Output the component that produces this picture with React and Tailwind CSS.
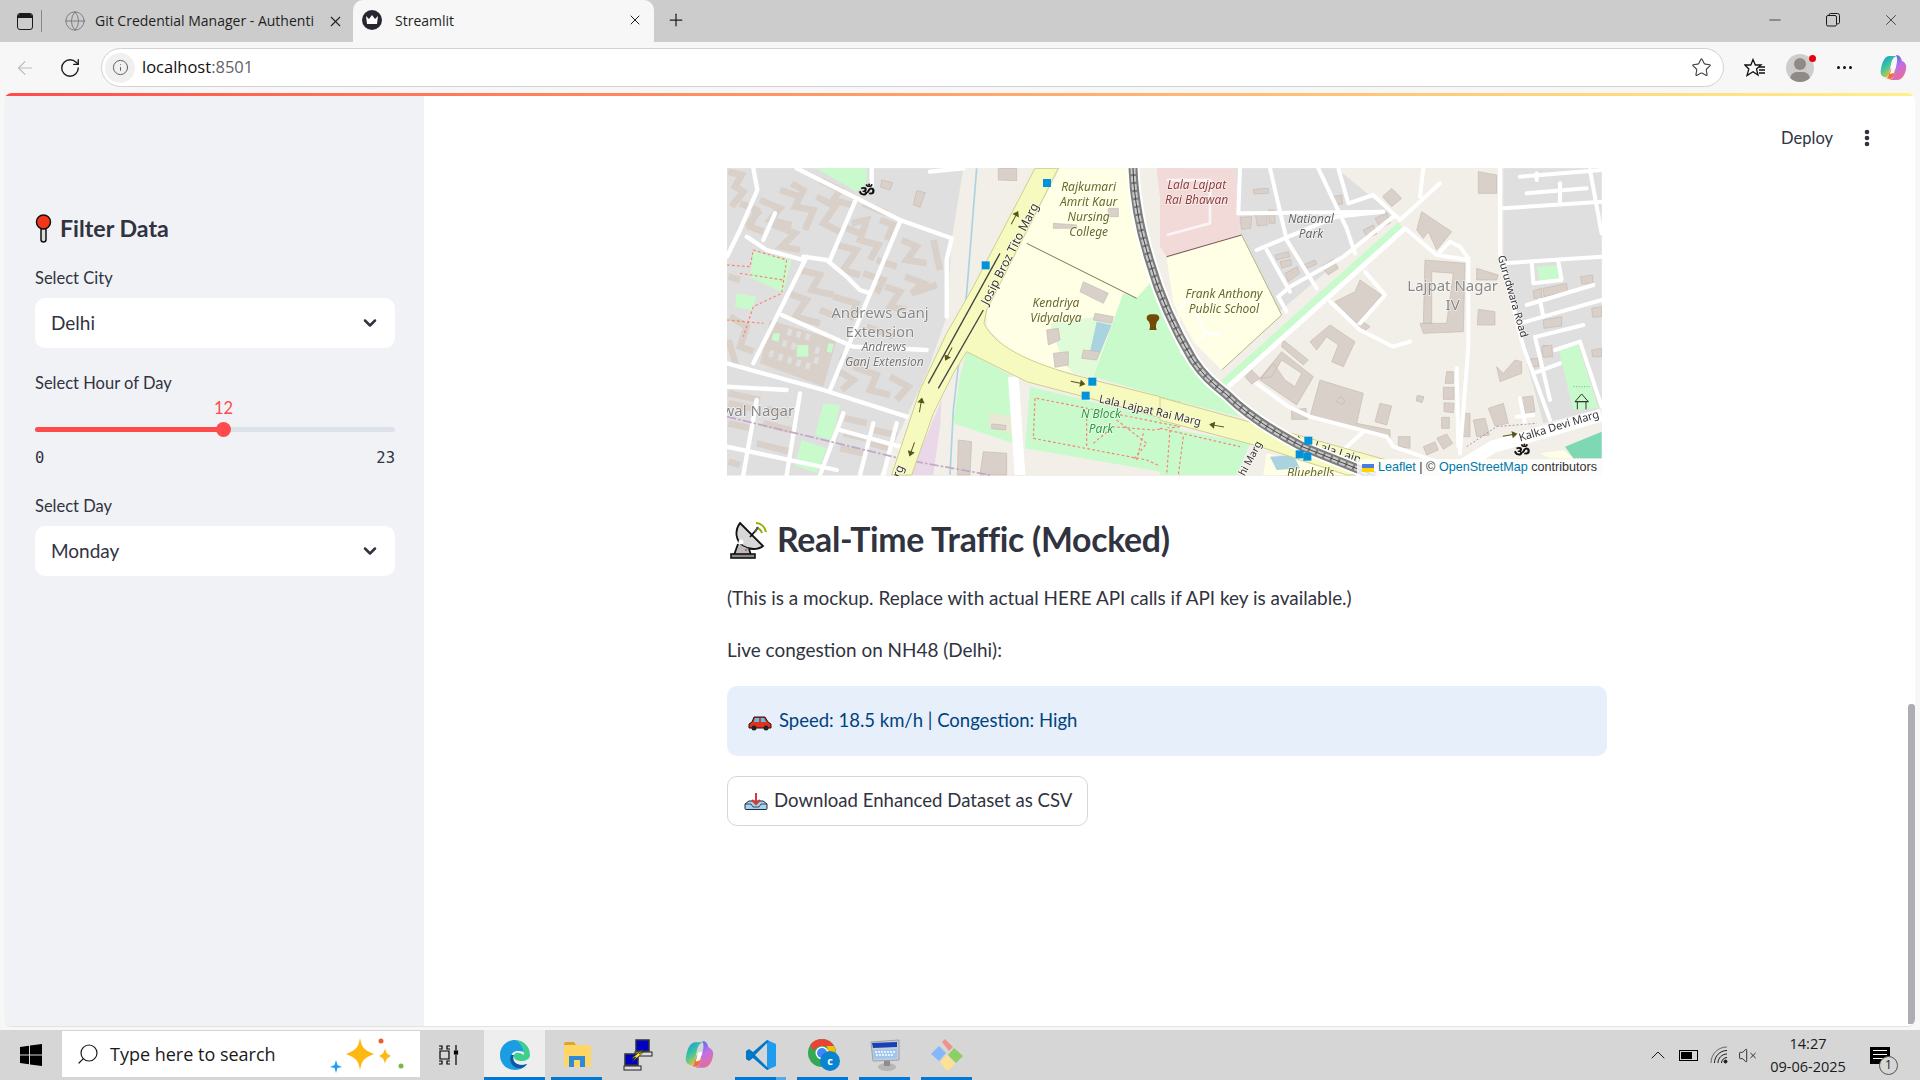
import { ChevronDown, Info, Minus, Plus, RotateCw, Search, Star, X, ArrowLeft, ChevronUp, VolumeX, Globe } from "lucide-react";

const GRAY = "#e0dfdf";
const GREEN = "#c8facc";
const BUILDING = "#d9d0c9";

// map pieces are written in 3x crop coordinates, see the two groups below
const leftAreas = [
  [GRAY, "21,25 730,25 695,240 680,470 620,640 560,770 480,945 21,945"],
  [BUILDING, "150,480 350,540 310,680 120,610"],
  [GREEN, "290,25 440,25 440,70 410,95"],
  [GREEN, "100,275 215,300 190,400 90,350"],
  [GREEN, "50,400 110,410 95,450 45,440"],
  [GREEN, "160,520 180,520 175,545 155,540"],
  [GREEN, "230,555 265,555 265,590 230,590"],
  [GREEN, "325,550 342,552 335,578 320,575"],
  [GREEN, "310,730 360,735 335,840 285,825"],
  [GREEN, "245,840 320,865 290,940 225,915"],
  ["#ead8e8", "665,720 570,945 640,945 660,800"],
  ["#ffffe5", "1020,25 1230,25 1270,200 1340,400 1290,370 1250,415 1210,400 1120,650 900,610 800,500 800,450"],
  ["#f2dad9", "1310,25 1380,25 1380,280 1340,290"],
  ["#ffffe5", "1340,295 1380,285 1380,500"],
  [GREEN, "1210,400 1250,415 1290,370 1380,530 1380,725 1120,650"],
  ["#e0fbd8", "990,490 1130,470 1180,470 1120,650 1060,640 1030,610"],
  ["#aad3df", "1130,485 1175,495 1140,580 1110,575"],
  [GREEN, "740,575 880,650 880,850 700,790 720,650"],
  [GREEN, "930,680 1380,790 1380,945 915,865"],
  ["#e9e9d6", "810,760 880,770 880,825 805,800"],
];

const leftBuildings = [
  "485,60 518,68 510,90 482,82",
  "590,92 616,98 600,142 580,134",
  "1090,365 1165,400 1150,430 1080,395",
  "1125,460 1180,470 1175,490 1120,480",
  "980,510 1015,505 1020,540 985,555",
  "1000,580 1045,575 1045,615 1005,622",
  "1090,570 1140,575 1130,600 1085,595",
  "1165,145 1195,145 1195,170 1165,170",
  "815,792 858,796 856,810 815,806",
  "1000,190 1070,195 1070,205 1000,205",
  "835,25 890,25 890,62 835,60",
  "790,875 860,880 860,945 780,945",
  "715,840 755,845 750,945 712,945",
];

const leftHouses = [
  "25,35 65,45 45,80 70,95 35,140",
  "120,120 180,145 150,180 215,195",
  "215,70 250,90 225,140 280,150 255,210",
  "290,110 345,140 310,190 360,215",
  "150,190 225,220 185,260 240,270",
  "395,190 440,180 420,240 475,255 450,300",
  "350,255 410,270 370,330 420,345",
  "545,240 590,260 560,300 620,310",
  "555,350 610,370 575,400 650,375",
  "495,380 540,395 510,440 560,450",
  "240,330 300,345 275,390 340,405",
  "205,400 260,420 225,470 300,490",
  "120,150 80,200",
  "30,470 80,500 60,560 100,575",
  "350,630 400,660 365,690",
  "400,620 470,645 450,690 510,705",
  "510,650 565,680 530,720",
  "60,130 110,150 90,200 130,215",
  "180,90 240,110",
  "300,60 360,90 340,120 395,135",
  "370,200 420,220",
  "430,130 500,160",
  "480,180 520,195 500,240",
  "470,300 530,320",
  "430,340 490,360 470,400",
  "340,410 410,430 390,480",
  "300,450 350,470",
  "440,500 520,530",
  "360,590 420,610",
  "25,350 60,360",
  "25,540 50,620",
  "640,240 660,330",
  "25,700 120,720",
  "25,730 120,750",
  "25,790 90,805",
  "25,905 60,915",
  "140,745 210,765",
  "130,790 220,812",
  "110,850 210,875",
  "375,775 440,790",
  "370,820 440,835",
  "360,865 430,880",
  "460,810 530,825",
  "450,850 510,865",
];

const leftRoads = [
  "230,25 540,180 695,235 680,300 680,470",
  "100,25 112,90 60,210 21,290",
  "540,185 330,690",
  "405,125 330,300",
  "260,290 100,610",
  "165,160 130,240",
  "80,230 140,270 250,300",
  "250,290 320,300 380,350 420,390 450,400",
  "185,465 400,560 620,570",
  "21,610 310,690 560,770",
  "21,680 200,690",
  "240,700 200,945",
  "370,760 300,945",
  "110,720 70,945",
  "460,790 420,945",
  "530,790 490,945",
  "360,810 540,860",
  "21,860 350,930",
  "455,25 455,75",
  "630,35 730,25",
];

const rightAreas = [
  [GRAY, "225,25 530,25 700,165 340,470 240,225"],
  [GRAY, "1030,25 1325,25 1325,745 1150,790 1090,570 1030,300"],
  ["#f2dad9", "0,25 225,25 240,225 20,290 0,260"],
  ["#ffffe5", "20,295 245,225 365,465 185,630 100,545 40,430"],
  [GREEN, "0,470 60,580 180,700 240,770 0,710"],
  [GREEN, "1130,320 1195,315 1200,355 1140,365"],
  [GREEN, "1195,565 1255,555 1315,745 1240,750"],
  ["#ffffe5", "320,880 590,945 310,945"],
  ["#aad3df", "330,890 400,885 420,925 350,930"],
  ["#7ed8b4", "1215,860 1325,815 1325,895 1240,895"],
  ["#ffffe5", "1140,880 1210,870 1240,895 1170,895"],
  [GREEN, "0,800 270,850 230,945 0,945"],
];

const rightBuildings = [
  "955,35 1010,45 1010,100 955,100",
  "695,85 725,115 695,140 668,110",
  "785,155 875,215 830,270 805,215 790,235 770,210",
  "795,300 915,310 910,515 790,520 780,490 860,490 880,340 815,335 815,490 790,490",
  "950,325 1015,345 1010,360 950,360",
  "955,448 1005,455 1005,495 952,495",
  "600,360 665,405 590,490 525,425 585,395",
  "510,495 585,545 550,620 515,605 535,555 500,530 470,570 450,545",
  "605,482 630,500 612,515 595,498",
  "370,540 445,600 430,615 365,560",
  "365,575 460,650 410,735 300,660 340,610 375,660 405,680 425,640 365,600 335,650 300,655",
  "275,630 300,655 275,672 255,650",
  "480,660 610,700 590,790 690,810 690,835 560,800 450,770",
  "540,710 555,720 548,735 530,725",
  "660,730 695,738 680,795 645,785",
  "1010,620 1030,640 1065,600 1085,605 1085,640 1020,665",
  "1150,555 1175,560 1170,580 1145,575",
  "860,635 880,635 880,670 855,670",
  "850,682 882,682 882,718 850,718",
  "852,728 882,730 880,758 852,755",
  "845,772 868,772 868,805 845,805",
  "772,706 792,710 786,728 768,722",
  "985,745 1030,730 1045,790 1005,798",
  "940,780 975,775 988,825 950,830",
  "905,760 930,760 930,830 905,830",
  "790,860 825,845 835,870 800,885",
  "830,835 860,822 878,850 850,868",
  "395,750 438,745 442,778 395,778",
  "715,830 750,830 750,865 715,860",
  "240,172 275,170 272,205 245,208",
  "285,160 320,155 322,195 292,198",
  "325,150 345,150 345,190 328,190",
  "345,285 385,275 390,290 350,300",
  "360,305 392,298 395,315 365,325",
  "375,340 412,320 418,340 385,365",
  "485,320 520,298 535,325 505,345",
  "430,315 465,300 470,312 435,328",
  "610,210 640,195 650,222 622,235",
  "645,175 680,158 692,188 662,205",
  "515,110 545,105 548,132 520,135",
  "280,88 325,85 325,100 282,102",
  "1262,350 1298,345 1298,372 1265,372",
  "1120,392 1145,385 1145,415 1122,415",
  "1150,385 1220,370 1222,395 1152,410",
  "1150,480 1205,470 1205,498 1152,505",
  "1295,445 1325,440 1325,470 1298,472",
  "1295,570 1325,565 1325,590 1298,590",
  "1110,597 1135,595 1135,620 1112,620",
  "1145,560 1175,555 1178,590 1150,592",
  "1085,712 1118,708 1125,755 1095,760",
];

const rightRoads = [
  "535,25 565,130 640,105 720,180",
  "720,180 840,70",
  "790,25 780,110",
  "735,205 830,285 925,300 925,560 900,880",
  "840,275 870,245 900,260 925,295",
  "1020,25 1020,280 1090,560 1170,780",
  "1030,145 1325,125",
  "1080,50 1325,30",
  "1100,100 1280,85",
  "1130,40 1130,60",
  "1200,70 1200,125",
  "1290,30 1325,220",
  "1030,310 1325,290",
  "1115,305 1120,370 1205,360 1195,305",
  "1100,435 1300,375",
  "1140,420 1150,470",
  "1080,490 1325,420",
  "1125,530 1170,720",
  "1130,530 1270,495",
  "1185,570 1260,545 1325,740",
  "1120,640 1200,610",
  "235,160 670,155",
  "235,160 240,25",
  "290,270 530,170 670,155",
  "320,270 390,395",
  "355,410 390,380 550,290 700,170",
  "355,410 380,455",
  "475,25 560,205 585,280",
  "330,25 380,240 470,385",
  "510,425 600,510 700,560 750,545",
  "615,335 675,405 600,490",
  "290,670 385,740 450,770 680,830 700,860 830,905",
  "1080,715 1095,790",
  "1070,770 1120,765",
  "890,625 895,860",
  "550,870 610,815",
];

const blueSquares = [
  [969, 57], [785, 304], [1105, 653], [1085, 695],
];
const blueSquaresRight = [
  [433, 830], [407, 871], [430, 878],
];

const redDashes = [
  "21,315 90,320 100,270 200,300 185,400 100,440 70,530",
  "60,340 190,360",
  "21,480 130,490",
  "950,715 1380,800",
  "945,715 940,835 1280,900 1380,945",
  "1100,760 1100,860",
  "1190,780 1280,850 1240,900",
  "1120,850 1180,800 1300,810 1380,800",
  "1270,820 1250,900",
];

// the rows of tiny yards in the block under the Andrews Ganj label
const yards = [
  [205, 505], [232, 512], [259, 519], [190, 540], [217, 547], [288, 560], [150, 570], [178, 580], [205, 590], [232, 598], [260, 606], [285, 590],
];

const railPath =
  "M1133 168C1134 200 1140 230 1150 262C1158 290 1172 325 1193 360C1205 378 1215 385 1227 395C1250 418 1280 435 1303 447L1353 467L1375 476";

function Arrow({ x, y, rot }) {
  return (
    <g transform={`translate(${x} ${y}) rotate(${rot})`} stroke="#55551c" strokeWidth="3" fill="none">
      <path d="M-22 0H18" />
      <path d="M8 -8L20 0L8 8Z" fill="#55551c" />
    </g>
  );
}

function MapLabel({ x, y, size, fill, rot, italic, children, weight }) {
  return (
    <text
      x={x}
      y={y}
      fontSize={size}
      fill={fill}
      fontStyle={italic ? "italic" : "normal"}
      fontWeight={weight || 400}
      textAnchor="middle"
      stroke="#ffffff"
      strokeOpacity="0.65"
      strokeWidth="4"
      paintOrder="stroke"
      transform={rot ? `rotate(${rot} ${x} ${y})` : undefined}
    >
      {children}
    </text>
  );
}

function OsmMap() {
  return (
    <svg viewBox="727 168 875 308" className="block h-[308px] w-[875px] font-['Noto_Sans',sans-serif] blur-[0.35px]">
      <rect x="727" y="168" width="875" height="308" fill="#f2efe9" />

      <g transform="translate(720 160) scale(0.33333)">
        <path d="M770 25L740 400L700 750L690 945" stroke="#aad3df" strokeWidth="5" fill="none" />
        {leftAreas.map(([fill, points]) => (
          <polygon key={points} points={points} fill={fill} />
        ))}
        {yards.map(([x, y]) => (
          <rect key={`${x}-${y}`} x={x} y={y} width="13" height="20" fill={GRAY} transform={`rotate(15 ${x} ${y})`} />
        ))}
        {leftBuildings.map((points) => (
          <polygon key={points} points={points} fill={BUILDING} stroke="#c5bab0" strokeWidth="2" />
        ))}
        {leftHouses.map((points) => (
          <polyline key={points} points={points} fill="none" stroke={BUILDING} strokeWidth="20" />
        ))}
        {leftRoads.map((points) => (
          <polyline key={points} points={points} fill="none" stroke="#ffffff" strokeWidth="13" strokeLinecap="round" strokeLinejoin="round" />
        ))}
        {redDashes.map((points) => (
          <polyline key={points} points={points} fill="none" stroke="#fa8072" strokeWidth="3.5" strokeDasharray="8 7" />
        ))}
        <path d="M21 770L560 900L810 945" stroke="#c2a8c8" strokeWidth="5" strokeDasharray="28 6 8 6" fill="none" />
        <path d="M880 650L900 945" stroke="#ffffff" strokeWidth="32" fill="none" />
        <path d="M920 250L1250 415" stroke="#77774d" strokeWidth="3" fill="none" />
        <path
          d="M945 25L1015 25L800 450L792 490C830 570 960 620 1120 660L1380 725L1380 790L1110 715L920 665L740 575L700 640L640 760L575 945L515 945L600 690L680 520L760 380Z"
          fill="#f7fabf"
          stroke="#cfcf8c"
          strokeWidth="3"
        />
        <path d="M840 280L625 670" stroke="#444" strokeWidth="4" />
        <path d="M790 450L655 685" stroke="#444" strokeWidth="4" />
        <Arrow x={884} y={173} rot={-62} />
        <Arrow x={686} y={582} rot={118} />
        <Arrow x={602} y={735} rot={-80} />
        <Arrow x={576} y={868} rot={110} />
        <Arrow x={1074} y={668} rot={12} />

        {blueSquares.map(([x, y]) => (
          <rect key={x} x={x} y={y} width="24" height="24" fill="#0092da" />
        ))}

        <path d="M1296 463C1278 462 1276 478 1286 484C1290 492 1292 500 1288 510H1310C1306 500 1308 492 1312 484C1322 478 1320 462 1302 463Z" fill="#734a08" />

        <MapLabel x={480} y={474} size={45} fill="#888888">Andrews Ganj</MapLabel>
        <MapLabel x={480} y={532} size={45} fill="#888888">Extension</MapLabel>
        <MapLabel x={492} y={572} size={36} fill="#777777" italic>Andrews</MapLabel>
        <MapLabel x={493} y={617} size={36} fill="#777777" italic>Ganj Extension</MapLabel>
        <MapLabel x={115} y={768} size={45} fill="#888888">wal Nagar</MapLabel>
        <MapLabel x={1106} y={94} size={36} fill="#6b6b24" italic>Rajkumari</MapLabel>
        <MapLabel x={1106} y={139} size={36} fill="#6b6b24" italic>Amrit Kaur</MapLabel>
        <MapLabel x={1106} y={184} size={36} fill="#6b6b24" italic>Nursing</MapLabel>
        <MapLabel x={1106} y={229} size={36} fill="#6b6b24" italic>College</MapLabel>
        <MapLabel x={1008} y={440} size={36} fill="#6b6b24" italic>Kendriya</MapLabel>
        <MapLabel x={1008} y={485} size={36} fill="#6b6b24" italic>Vidyalaya</MapLabel>
        <MapLabel x={1143} y={774} size={36} fill="#2f9a45" italic>N Block</MapLabel>
        <MapLabel x={1143} y={819} size={36} fill="#2f9a45" italic>Park</MapLabel>
        <MapLabel x={880} y={287} size={36} fill="#333333" rot={-63}>Josip Broz Tito Marg</MapLabel>
        <MapLabel x={546} y={938} size={36} fill="#333333" rot={-68}>rg</MapLabel>
        <text x="440" y="112" fontSize="50" fontWeight="700" fill="#111111" textAnchor="middle">ॐ</text>
      </g>

      <g transform="translate(1160 160) scale(0.33333)">
        {rightAreas.map(([fill, points]) => (
          <polygon key={points} points={points} fill={fill} />
        ))}
        {rightBuildings.map((points) => (
          <polygon key={points} points={points} fill={BUILDING} stroke="#c5bab0" strokeWidth="2" />
        ))}
        {rightRoads.map((points) => (
          <polyline key={points} points={points} fill="none" stroke="#ffffff" strokeWidth="12" strokeLinecap="round" strokeLinejoin="round" />
        ))}
        <path d="M20 290L245 225" stroke="#77554d" strokeWidth="3" />
        <path d="M245 225L365 465L185 630" stroke="#b5b58a" strokeWidth="3" fill="none" />
        <path d="M720 195L190 670" stroke={GREEN} strokeWidth="20" fill="none" />
        <path d="M735 205L205 680" stroke="#ffffff" strokeWidth="15" fill="none" />
        <path d="M20 60H150V190L20 225" stroke="#ffffff" strokeOpacity="0.7" strokeWidth="8" fill="none" />
        <path d="M110 460L135 520L110 545M135 520L180 525M80 420L60 445" stroke="#ffffff" strokeWidth="8" fill="none" />
        <path
          d="M0 712L430 830L680 900L620 945L560 945L300 860L0 780Z"
          fill="#f7fabf"
          stroke="#cfcf8c"
          strokeWidth="3"
        />
        <path d="M860 945L1000 860L1325 765" stroke="#ffffff" strokeWidth="38" fill="none" />
        <path d="M920 860L1010 800L1130 790" stroke="#a792ad" strokeWidth="3" strokeDasharray="6 6" fill="none" />
        <path d="M0 805L240 860M30 810L20 945M70 830L55 945" stroke="#fa8072" strokeWidth="3.5" strokeDasharray="8 7" fill="none" />
        <path d="M1245 725H1285M1252 725V748M1278 725V748M1265 702L1245 725H1285Z" stroke="#333" strokeWidth="3" fill="none" />
        <path d="M1240 680H1290" stroke="#6fb57a" strokeWidth="3" strokeDasharray="3 5" />
        <Arrow x={170} y={797} rot={190} />
        <Arrow x={405} y={835} rot={18} />
        <Arrow x={1050} y={825} rot={-10} />
        <MapLabel x={110} y={86} size={36} fill="#8f3c3c" italic>Lala Lajpat</MapLabel>
        <MapLabel x={110} y={131} size={36} fill="#8f3c3c" italic>Rai Bhawan</MapLabel>
        <MapLabel x={453} y={190} size={36} fill="#666666" italic>National</MapLabel>
        <MapLabel x={453} y={234} size={36} fill="#666666" italic>Park</MapLabel>
        <MapLabel x={192} y={414} size={36} fill="#6b6b24" italic>Frank Anthony</MapLabel>
        <MapLabel x={192} y={459} size={36} fill="#6b6b24" italic>Public School</MapLabel>
        <MapLabel x={878} y={393} size={45} fill="#888888">Lajpat Nagar</MapLabel>
        <MapLabel x={878} y={451} size={45} fill="#888888">IV</MapLabel>
        <MapLabel x={1048} y={412} size={32} fill="#333333" rot={74}>Gurudwara Road</MapLabel>
        <MapLabel x={1200} y={808} size={33} fill="#333333" rot={-17}>Kalka Devi Marg</MapLabel>
        <MapLabel x={530} y={888} size={35} fill="#333333" rot={18}>Lala Lajp</MapLabel>
        <MapLabel x={280} y={900} size={31} fill="#333333" rot={-62}>hi Marg</MapLabel>
        <MapLabel x={452} y={952} size={36} fill="#6b6b24" italic>Bluebells</MapLabel>
        <text x="1086" y="890" fontSize="50" fontWeight="700" fill="#111111" textAnchor="middle">ॐ</text>
      </g>

      <path d={railPath} fill="none" stroke="#ffffff" strokeWidth="13" />
      <path d={railPath} fill="none" stroke="#7c7c7c" strokeWidth="9" />
      <path d={railPath} fill="none" stroke="#c8c8c8" strokeWidth="5" strokeDasharray="6 2" />
      <path d={railPath} fill="none" stroke="#444444" strokeWidth="1" />

      <g transform="translate(1160 160) scale(0.33333)">
        {blueSquaresRight.map(([x, y]) => (
          <rect key={x} x={x} y={y} width="24" height="24" fill="#0092da" />
        ))}
      </g>
      <g transform="translate(720 160) scale(0.33333)">
        <MapLabel x={1288} y={762} size={33} fill="#333333" rot={13}>Lala Lajpat Rai Marg</MapLabel>
      </g>
    </svg>
  );
}

function Copilot({ size, id }) {
  return (
    <svg width={size} height={size} viewBox="0 0 28 28">
      <defs>
        <linearGradient id={`${id}a`} x1="0" y1="0" x2="0.6" y2="1">
          <stop offset="0" stopColor="#1c8fe0" />
          <stop offset="0.5" stopColor="#38c6a0" />
          <stop offset="1" stopColor="#f4c430" />
        </linearGradient>
        <linearGradient id={`${id}b`} x1="0.2" y1="0" x2="0.8" y2="1">
          <stop offset="0" stopColor="#2a6fe8" />
          <stop offset="0.5" stopColor="#c070e8" />
          <stop offset="1" stopColor="#f06a8a" />
        </linearGradient>
      </defs>
      <path d="M10 2H18C14 3 13 6 12 10L10 20C9.500 23 7 24 5 23C2 22 1 19 2 15C3 9 5 3 10 2Z" fill={`url(#${id}a)`} />
      <path d="M17 1C21 1 22 4 23 7C26 8 28 11 27 15C26 21 23 26 18 26H9C14 26 15 22 16 18L18 8C18.500 5 18 3 17 1Z" fill={`url(#${id}b)`} />
      <path d="M11 25C13 25 15 23 16 18L17 15L12 14L10 20C9.500 23 8 25 6 24Z" fill="#f0703c" />
      <path d="M13 12L17 11L15 19L11 20Z" fill="#ffffff" />
    </svg>
  );
}

function Underline({ width, extra }) {
  return (
    <div className="absolute bottom-0 left-0 flex h-[3px]">
      <div className="bg-[#0078d4]" style={{ width }} />
      {extra ? <div className="w-[10px] bg-[#5aa9e6]" /> : null}
    </div>
  );
}

function TaskIcon({ className, underline, extra, children }) {
  return (
    <div className={`relative flex h-full items-center justify-center ${className}`}>
      {children}
      {underline ? <Underline width={underline} extra={extra} /> : null}
    </div>
  );
}

function Field({ label, value }) {
  return (
    <div>
      <div className="mb-[9px] text-[16.5px] leading-[22px] text-[#31333f]">{label}</div>
      <div className="flex h-[50px] items-center justify-between rounded-[10px] bg-white pl-4 pr-[15px] text-[19px] text-[#31333f]">
        <span>{value}</span>
        <ChevronDown size={20} strokeWidth={3} className="text-[#31333f]" />
      </div>
    </div>
  );
}

function Sidebar() {
  return (
    <aside className="w-[420px] shrink-0 rounded-bl-lg bg-[#f0f2f6] pl-[31px] pr-[29px] pt-[118px]">
      <div className="flex h-[28px] items-center gap-[8px]">
        <svg width="17" height="29" viewBox="0 0 17 29" className="shrink-0">
          <rect x="6" y="14" width="5" height="14" rx="2.500" fill="#dddddd" stroke="#111111" strokeWidth="1.500" />
          <circle cx="8.500" cy="8" r="7" fill="#f1371a" stroke="#111111" strokeWidth="1.500" />
        </svg>
        <span className="text-[23.2px] font-bold text-[#31333f]">Filter Data</span>
      </div>
      <div className="mt-[25px]">
        <Field label="Select City" value="Delhi" />
      </div>
      <div className="mt-[24px]">
        <div className="text-[16.5px] leading-[22px] text-[#31333f]">Select Hour of Day</div>
        <div className="mt-[3px] pl-[179px] text-[16.5px] leading-[22px] text-[#ff4b4b]">12</div>
        <div className="relative mt-[8px] h-[5px] rounded-full bg-[#dde1ea]">
          <div className="h-full w-[188px] rounded-full bg-[#ff4b4b]" />
          <div className="absolute left-[181px] top-[-5px] h-[15px] w-[15px] rounded-full bg-[#ff4b4b]" />
        </div>
        <div className="mt-[15px] flex justify-between font-['DejaVu_Sans_Mono',monospace] text-[15.5px] leading-[22px] text-[#31333f]">
          <span>0</span>
          <span>23</span>
        </div>
      </div>
      <div className="mt-[26px]">
        <Field label="Select Day" value="Monday" />
      </div>
    </aside>
  );
}

function MainPanel() {
  return (
    <main className="relative flex-1 pl-[303px] pt-[72px]">
      <div className="absolute right-[45px] top-[30px] flex items-center gap-[31px]">
        <span className="text-[16.5px] text-[#31333f]">Deploy</span>
        <svg width="6" height="18" viewBox="0 0 6 18" fill="#31333f">
          <circle cx="3" cy="3" r="2.300" />
          <circle cx="3" cy="9" r="2.300" />
          <circle cx="3" cy="15" r="2.300" />
        </svg>
      </div>

      <div className="relative h-[308px] w-[875px] overflow-hidden">
        <OsmMap />
        <div className="absolute bottom-0 right-0 flex h-[17px] w-[245px] items-center gap-[4px] whitespace-nowrap bg-white/80 pl-[5px] font-['Liberation_Sans',sans-serif] text-[12.6px] text-[#333333]">
          <span className="flex h-[8px] w-[12px] shrink-0 flex-col">
            <span className="h-1/2 bg-[#4c7be1]" />
            <span className="h-1/2 bg-[#ffd500]" />
          </span>
          <span>
            <span className="text-[#0078a8]">Leaflet</span> | © <span className="text-[#0078a8]">OpenStreetMap</span> contributors
          </span>
        </div>
      </div>

      <div className="ml-[2px] mt-[44px] flex h-[40px] items-center gap-[8px]">
        <svg width="40" height="40" viewBox="0 0 40 40" className="shrink-0">
          <path d="M27 3C32 3 36 7 37 12" fill="none" stroke="#8fb000" strokeWidth="2" />
          <path d="M27 8C30 8 32 10 33 13" fill="none" stroke="#8fb000" strokeWidth="2" />
          <path d="M11 3L34 26C29 30 20 30 14 26C7 21 5 11 11 3Z" fill="#d7d7d7" stroke="#111111" strokeWidth="1.800" />
          <path d="M21 17L28 9" stroke="#111111" strokeWidth="1.800" />
          <path d="M29 7L26 12" stroke="#555555" strokeWidth="2" />
          <path d="M9 24L5 35H22L20 29" fill="#bbbbbb" stroke="#111111" strokeWidth="1.800" />
          <rect x="2" y="34" width="24" height="4" fill="#8a8a8a" stroke="#111111" strokeWidth="1.600" />
          <circle cx="12" cy="22" r="2.500" fill="#ffffff" />
          <circle cx="17" cy="30" r="1" fill="#e53935" />
        </svg>
        <h2 className="text-[33.8px] font-bold leading-none tracking-[-0.3px] text-[#31333f]">Real-Time Traffic (Mocked)</h2>
      </div>

      <p className="mt-[23px] text-[18.93px] leading-[30px] text-[#31333f]">(This is a mockup. Replace with actual HERE API calls if API key is available.)</p>
      <p className="mt-[22px] text-[18.93px] leading-[30px] text-[#31333f]">Live congestion on NH48 (Delhi):</p>

      <div className="mt-[21px] flex h-[70px] w-[880px] items-center gap-[7px] rounded-[10px] bg-[#e7f0fa] pl-[21px] text-[18.5px] text-[#004280]">
        <svg width="24" height="16" viewBox="0 0 24 16" className="mt-[4px] shrink-0">
          <path d="M6 2L4 7L1 9L1 13H23V9L20 7L17 2Z" fill="#e0301e" stroke="#2b0f0b" strokeWidth="1" />
          <path d="M7 3L6 7H11V3ZM13 3V7H18L16 3Z" fill="#56c5ee" />
          <circle cx="6" cy="13" r="2.500" fill="#222222" />
          <circle cx="18" cy="13" r="2.500" fill="#222222" />
        </svg>
        <span>Speed: 18.5 km/h | Congestion: High</span>
      </div>

      <button className="mt-[20px] flex h-[50px] w-[361px] items-center gap-[6px] whitespace-nowrap rounded-[10px] border border-[#d5d6d9] bg-white pl-[16px] text-[18.6px] text-[#31333f]">
        <svg width="24" height="18" viewBox="0 0 24 18" className="shrink-0">
          <path d="M5 9L1 12V16.500Q1 17.500 2 17.500H22Q23 17.500 23 16.500V12L19 9Z" fill="#a8d3ee" stroke="#1c2c3a" strokeWidth="1" />
          <path d="M1 12H7L9 15H15L17 12H23" fill="none" stroke="#1c2c3a" strokeWidth="0.800" />
          <path d="M12 1V11M8 8L12 12L16 8" fill="none" stroke="#d63a3a" strokeWidth="2" />
        </svg>
        <span>Download Enhanced Dataset as CSV</span>
      </button>

      <div className="absolute bottom-[2px] right-[0px] top-[608px] w-[7px] rounded-t-[3px] bg-[#aeaeb2]" />
    </main>
  );
}

function TabStrip() {
  return (
    <div className="flex h-[42px] shrink-0 items-center bg-[#cccccc] font-['Open_Sans',sans-serif] text-[14px] text-[#1f1f1f]">
      <div className="ml-[17px] flex h-[17px] w-[16px] flex-col overflow-hidden rounded-[3px] border-[1.5px] border-[#1a1a1a]">
        <div className="h-[4px] bg-[#1a1a1a]" />
      </div>
      <div className="ml-[8px] h-[22px] w-px bg-[#888888]" />
      <Globe size={22} strokeWidth={1} className="ml-[22px] shrink-0 text-[#777777]" />
      <div className="ml-[9px] mb-[2px] w-[224px] overflow-hidden whitespace-nowrap">Git Credential Manager - Authenti</div>
      <X size={17} strokeWidth={1.500} className="ml-[8px] shrink-0" />
      <div className="ml-[9px] flex h-full w-[301px] items-center rounded-t-[10px] bg-[#f7f7f7] pb-[2px] pl-[9px] pr-[11px]">
        <div className="flex h-[20px] w-[20px] items-center justify-center rounded-full bg-[#262730]">
          <svg width="12" height="10" viewBox="0 0 12 10" fill="#ffffff">
            <path d="M0 1L3 4L6 0L9 4L12 1L11 9H1Z" />
          </svg>
        </div>
        <span className="ml-[13px] flex-1">Streamlit</span>
        <X size={16} strokeWidth={1.500} />
      </div>
      <Plus size={20} strokeWidth={1.500} className="ml-[12px] mb-[2px]" />
      <div className="ml-auto mb-[2px] flex items-center gap-[42px] pr-[20px]">
        <Minus size={18} strokeWidth={1} />
        <svg width="14" height="14" viewBox="0 0 14 14" fill="none" stroke="#1a1a1a" strokeWidth="1">
          <rect x="0.500" y="2.500" width="10" height="10.500" rx="1.500" />
          <path d="M3 2.500V2Q3 0.500 4.500 0.500H11.500Q13.500 0.500 13.500 2.500V9.500Q13.500 11 11 11" />
        </svg>
        <X size={18} strokeWidth={1} />
      </div>
    </div>
  );
}

function Toolbar() {
  return (
    <div className="flex h-[51px] shrink-0 items-center bg-[#f7f7f7] font-['Open_Sans',sans-serif]">
      <ArrowLeft size={22} strokeWidth={1.200} className="ml-[14px] text-[#bbbbbb]" />
      <RotateCw size={22} strokeWidth={1.500} className="ml-[23px] text-[#1a1a1a]" />
      <div className="ml-[20px] flex h-[39px] w-[1623px] items-center rounded-full border border-[#d2d2d2] bg-white pl-[3px] pr-[11px]">
        <div className="flex h-[30px] w-[30px] items-center justify-center rounded-full bg-[#f0f0f0]">
          <Info size={17} strokeWidth={1.300} className="text-[#555555]" />
        </div>
        <span className="ml-[7px] flex-1 text-[16.5px] text-[#111111]">
          localhost<span className="text-[#5f6368]">:8501</span>
        </span>
        <Star size={21} strokeWidth={1.300} className="text-[#444444]" />
      </div>
      <svg width="22" height="20" viewBox="0 0 22 20" fill="none" stroke="#111111" strokeWidth="1.300" className="ml-[20px] shrink-0">
        <path d="M9 1.500L11.300 7H17L12.500 11L14 17L9 13.800L3 17.500L4.800 11L1 7H6.800Z" />
        <path d="M15 9H21M15 12H21M15 15H21" />
      </svg>
      <div className="relative ml-[20px] h-[28px] w-[28px] shrink-0 overflow-hidden rounded-full bg-[#cfcdcb]">
        <div className="absolute left-[8px] top-[4px] h-[12px] w-[12px] rounded-full bg-[#8e8a86]" />
        <div className="absolute left-[4px] top-[18px] h-[14px] w-[20px] rounded-full bg-[#8e8a86]" />
      </div>
      <div className="relative -ml-[5px] -mt-[19px] h-[7px] w-[7px] rounded-full bg-[#e60012]" />
      <div className="ml-[21px] flex gap-[3px]">
        <div className="h-[3px] w-[3px] rounded-full bg-[#111111]" />
        <div className="h-[3px] w-[3px] rounded-full bg-[#111111]" />
        <div className="h-[3px] w-[3px] rounded-full bg-[#111111]" />
      </div>
      <div className="ml-[27px]">
        <Copilot size={28} id="tb" />
      </div>
    </div>
  );
}

function Taskbar() {
  return (
    <div className="flex h-[50px] shrink-0 items-center bg-[#d6d6d6] font-['Open_Sans',sans-serif] text-[#1a1a1a]">
      <div className="flex w-[62px] items-center justify-center">
        <svg width="22" height="22" viewBox="0 0 22 22" fill="#000000">
          <path d="M0 3L9 1.700V10.500H0ZM10 1.500L22 0V10.500H10ZM0 11.500H9V20.300L0 19ZM10 11.500H22V22L10 20.500Z" />
        </svg>
      </div>
      <div className="flex h-[47px] w-[358px] items-center self-start border-t border-[#d6d6d6] bg-white pl-[14px]">
        <Search size={24} strokeWidth={1.200} className="-scale-x-100" />
        <span className="ml-[10px] text-[18px]">Type here to search</span>
        <svg width="76" height="40" viewBox="0 0 76 40" className="ml-[54px]">
          <path d="M30 4C32 14 34 16 44 20C34 24 32 26 30 36C28 26 26 24 16 20C26 16 28 14 30 4Z" fill="#fdb813" />
          <path d="M55 14C56 19 57 20 61 22C57 24 56 25 55 30C54 25 53 24 49 22C53 20 54 19 55 14Z" fill="#fdb813" />
          <circle cx="51" cy="7" r="2.500" fill="#e8602c" />
          <circle cx="71" cy="32" r="2.500" fill="#7ab648" />
          <path d="M6 26L7.500 31L12 33L7.500 34L6 39L4.500 34L0 33L4.500 31Z" fill="#1da1f2" />
        </svg>
      </div>
      <div className="flex w-[60px] justify-center pr-[3px]">
        <svg width="20" height="20" viewBox="0 0 20 20" fill="none" stroke="#000000" strokeWidth="1.200">
          <path d="M0 1H3V4H0M11 1H8V4H11M0 19H3V16H0M11 19H8V16H11M1 6H10V14H1ZM17 0V5M17 10V20" />
          <rect x="15.500" y="6" width="3" height="3" fill="#000000" />
        </svg>
      </div>
      <TaskIcon className="ml-[4px] w-[61px] bg-[#eeeeee]" underline={61}>
        <svg width="30" height="30" viewBox="0 0 30 30">
          <path d="M15 0C23 0 30 6 30 15C30 19 26 21 21 21C16 21 13 18 14 15C16 11 21 13 24 15C24 8 20 2 15 0Z" fill="#3ccf8e" />
          <path d="M15 0C6 0 0 7 0 15C0 24 7 30 15 30C20 30 25 27 27 24C22 26 16 25 13 21C10 16 11 8 24 12C22 5 19 1 15 0Z" fill="#1b9de2" />
          <path d="M11 15C8 22 14 30 22 28C25 27 26 25 27 24C22 26 16 25 14 21C13 19 13 17 14 15Z" fill="#0c59a4" />
        </svg>
      </TaskIcon>
      <TaskIcon className="ml-[6px] w-[51px]" underline={51}>
        <svg width="28" height="26" viewBox="0 0 28 26">
          <path d="M1 2Q1 0 3 0H11L13 3H1Z" fill="#e0a526" />
          <rect x="1" y="3" width="27" height="22" rx="2" fill="#fdd665" />
          <path d="M6 25V14H22V25H17V18H11V25Z" fill="#2f8ad6" />
        </svg>
      </TaskIcon>
      <TaskIcon className="ml-[10px] w-[51px]">
        <svg width="30" height="32" viewBox="0 0 30 32">
          <rect x="13" y="1" width="13" height="11" fill="#0000c8" stroke="#333333" strokeWidth="1.500" />
          <rect x="12" y="13" width="17" height="4" fill="#dddddd" stroke="#222222" strokeWidth="1" />
          <rect x="2" y="15" width="13" height="11" fill="#0000c8" stroke="#333333" strokeWidth="1.500" />
          <rect x="1" y="27" width="17" height="4" fill="#dddddd" stroke="#222222" strokeWidth="1" />
          <path d="M8 20L20 10L16 15L22 12L9 23L13 18Z" fill="#f8e71c" stroke="#222222" strokeWidth="0.600" />
        </svg>
      </TaskIcon>
      <TaskIcon className="ml-[10px] w-[52px]">
        <Copilot size={30} id="task" />
      </TaskIcon>
      <TaskIcon className="ml-[10px] w-[51px]" underline={41} extra>
        <svg width="30" height="30" viewBox="0 0 30 30">
          <path d="M21 0L30 4V26L21 30Z" fill="#1f9cf0" />
          <path d="M23 1L9 15L23 29L21 30L7 18L3 21L0 19V11L3 9L7 12L21 0Z" fill="#0078c8" />
        </svg>
      </TaskIcon>
      <TaskIcon className="ml-[11px] w-[51px] pl-[3px]" underline={51}>
        <svg width="32" height="33" viewBox="0 0 32 33">
          <circle cx="14" cy="14" r="14" fill="#34a853" />
          <path d="M14 0C19 0 24 3 26 7H14C10 7 7 9 6 12L2 6C5 2 9 0 14 0Z" fill="#ea4335" />
          <path d="M26 7C28 11 28 16 26 20L20 14L19 7Z" fill="#fbbc05" />
          <circle cx="14" cy="14" r="6.500" fill="#ffffff" />
          <circle cx="14" cy="14" r="5" fill="#4285f4" />
          <circle cx="22" cy="22" r="10" fill="#0a84d0" />
          <text x="22" y="26" fontSize="11" fontWeight="700" fill="#ffffff" textAnchor="middle">c</text>
        </svg>
      </TaskIcon>
      <TaskIcon className="ml-[11px] w-[51px]" underline={51}>
        <svg width="30" height="32" viewBox="0 0 30 32">
          <path d="M1 3L29 1V21L3 22Z" fill="#c9ced4" stroke="#9aa1a8" strokeWidth="1" />
          <path d="M2 4L27 3V8L3 9Z" fill="#1b3fb5" />
          <path d="M3 11L27 10V19L4 20Z" fill="#9cc7f0" />
          <path d="M5 13H25M6 16H24" stroke="#ffffff" strokeWidth="1.500" strokeDasharray="2 1" />
          <ellipse cx="17" cy="28" rx="9" ry="4" fill="#b6b6b6" />
          <rect x="14" y="22" width="6" height="5" fill="#8d8d8d" />
        </svg>
      </TaskIcon>
      <TaskIcon className="ml-[11px] w-[51px]" underline={51}>
        <svg width="32" height="32" viewBox="0 0 32 32">
          <path d="M0 15L8 7L15 14L8 22Z" fill="#86b7fa" />
          <path d="M11 3L14 0L22 8L18 12Z" fill="#f2918b" />
          <path d="M23 9L32 17L25 24L17 16Z" fill="#8ccf64" />
          <path d="M9 23L16 16L24 25L16 32Z" fill="#fde293" />
        </svg>
      </TaskIcon>

      <div className="ml-auto flex h-full items-center">
        <ChevronUp size={24} strokeWidth={1} />
        <div className="ml-[9px] flex h-[11px] w-[19px] items-center border border-black p-[1px]">
          <div className="h-full w-[11px] bg-black" />
        </div>
        <svg width="18" height="18" viewBox="0 0 18 18" fill="none" stroke="#1a1a1a" strokeWidth="1" className="ml-[12px]">
          <path d="M1 17C1 8 8 1 17 1" strokeOpacity="0.6" />
          <path d="M4.500 17C4.500 10 10 4.500 17 4.500" />
          <path d="M8 17C8 12 12 8 17 8" />
          <path d="M11.500 17C11.500 14 14 11.500 17 11.500" />
          <circle cx="15.500" cy="15.500" r="1.500" fill="#1a1a1a" />
        </svg>
        <VolumeX size={19} strokeWidth={1.100} className="ml-[10px]" />
        <div className="ml-[9px] flex w-[84px] flex-col items-center text-[14.5px] leading-[23px]">
          <span>14:27</span>
          <span>09-06-2025</span>
        </div>
        <div className="relative ml-[20px] mr-[30px] h-[17px] w-[20px] bg-black">
          <div className="absolute left-[3px] top-[3px] h-[1px] w-[14px] bg-white" />
          <div className="absolute left-[3px] top-[7px] h-[1px] w-[14px] bg-white" />
          <div className="absolute left-[3px] top-[11px] h-[1px] w-[14px] bg-white" />
          <div className="absolute left-[9px] top-[9px] flex h-[19px] w-[19px] items-center justify-center rounded-full border border-[#555555] bg-[#d6d6d6] text-[12px]">1</div>
        </div>
      </div>
    </div>
  );
}

export default function App() {
  return (
    <div className="flex h-screen w-screen flex-col overflow-hidden bg-[#f7f7f7] font-['Lato',sans-serif]">
      <TabStrip />
      <Toolbar />
      <div className="flex min-h-0 flex-1 flex-col pb-[3px] pl-[4px] pr-[5px]">
        <div className="flex flex-1 flex-col overflow-hidden rounded-lg border-b border-[#e3e3e3] bg-white">
          <div className="h-[3px] shrink-0 bg-gradient-to-r from-[#ff4b4b] to-[#fff08a]" />
          <div className="flex min-h-0 flex-1">
            <Sidebar />
            <MainPanel />
          </div>
        </div>
      </div>
      <Taskbar />
    </div>
  );
}
